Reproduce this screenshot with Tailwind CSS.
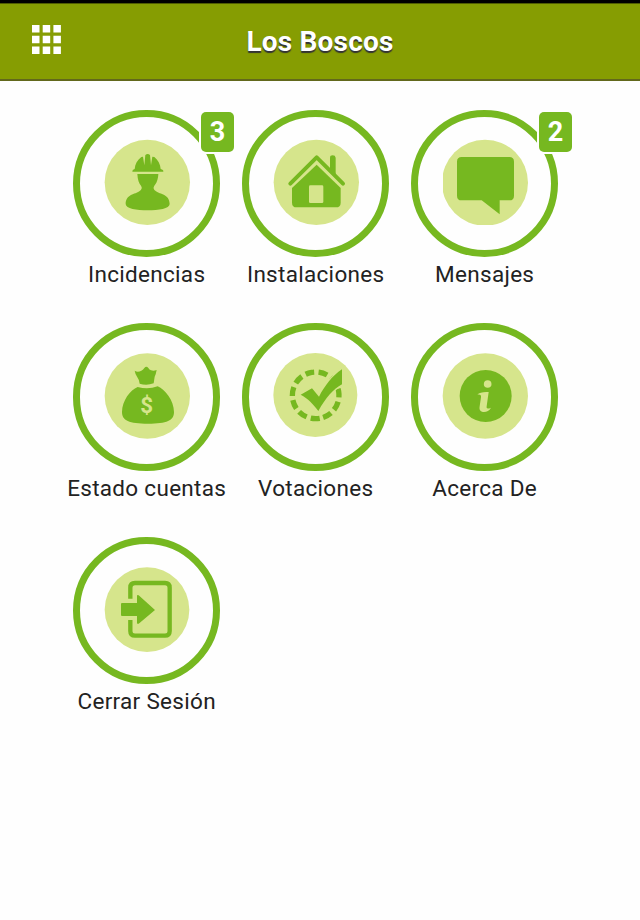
<!DOCTYPE html>
<html lang="es">
<head>
  <meta charset="UTF-8">
  <meta name="viewport" content="width=device-width, initial-scale=1.0">
  <title>Los Boscos</title>
  <script src="https://cdn.jsdelivr.net/npm/@tailwindcss/browser@4"></script>
</head>
<body class="min-h-screen bg-[#fefefe] font-[Roboto,sans-serif] text-[#222222]">
  <header class="grid h-[81px] grid-cols-[1fr_auto_1fr] items-center border-t-3 border-b-2 border-t-black border-b-[#62681c] bg-[#869d02] px-8 shadow-[inset_0_1px_0_#4f5c02]">
    <button class="mb-[3px] w-fit" aria-label="Menú">
      <svg class="size-[29px]" viewBox="0 0 29 29" fill="#fff">
        <path d="M0 0h7.5v7.5H0zM10.7 0h7.5v7.5h-7.5zM21.4 0h7.5v7.5h-7.5zM0 10.8h7.5v7.5H0zM10.7 10.8h7.5v7.5h-7.5zM21.4 10.8h7.5v7.5h-7.5zM0 21.5h7.5V29H0zM10.7 21.5h7.5V29h-7.5zM21.4 21.5h7.5V29h-7.5z"/>
      </svg>
    </button>
    <h1 class="pt-0.5 text-[28px] leading-8 font-bold tracking-[0.2px] text-white [text-shadow:0_1.5px_1px_#333]">Los Boscos</h1>
  </header>

  <main class="grid grid-cols-[repeat(3,169px)] auto-rows-[213.5px] pt-[28.5px] pl-[62.2px]">
    <!-- Incidencias -->
    <a class="flex flex-col items-center">
      <div class="relative flex size-[147.5px] items-center justify-center rounded-full border-7 border-[#76b820]">
        <svg class="size-[90px] shrink-0" viewBox="0 0 270 270" fill="#76b820">
          <circle cx="136" cy="133" r="128" fill="#d6e58c"/>
          <path d="M91 101q-1-6 7-8c1-15 8-27 20-36l5-1 4 26 3-31q7-6 14 0l3 31 4-26 6 1c11 9 18 21 19 36q9 2 8 8z"/>
          <path d="M106 108h63c-1 18-6 29-12 35-4 6-3 11 5 17 12 9 41 9 41 38 0 14-33 19-66 19s-66-5-66-19c0-29 29-29 41-38 8-6 9-11 5-17-6-6-10-17-11-35z"/>
        </svg>
        <span class="absolute -top-[5px] left-[121px] flex h-10 w-[33px] items-center justify-center rounded-[5px] bg-[#76b820] pt-0.5 text-[27px] leading-none font-bold text-white shadow-[0_0_0_2px_#fefefe]">3</span>
      </div>
      <span class="mt-[3px] text-[22.5px] leading-7 tracking-[0.3px] whitespace-nowrap">Incidencias</span>
    </a>
    <!-- Instalaciones -->
    <a class="flex flex-col items-center">
      <div class="relative flex size-[147.5px] items-center justify-center rounded-full border-7 border-[#76b820]">
        <svg class="size-[90px] shrink-0" viewBox="0 0 270 270" fill="#76b820">
          <circle cx="136" cy="133" r="128" fill="#d6e58c"/>
          <path d="M177 59q0-7 8-7t9 7v60l-17-17z"/>
          <path d="M58 137l79-79 79 79" fill="none" stroke="#76b820" stroke-width="12" stroke-linecap="round" stroke-linejoin="round"/>
          <path d="M137 80l72 70v44q0 14-14 14H77q-14 0-14-14v-44z"/>
          <rect x="114" y="142" width="43" height="53" rx="4" fill="#d6e58c"/>
        </svg>
      </div>
      <span class="mt-[3px] text-[22.5px] leading-7 tracking-[0.3px] whitespace-nowrap">Instalaciones</span>
    </a>
    <!-- Mensajes -->
    <a class="flex flex-col items-center">
      <div class="relative flex size-[147.5px] items-center justify-center rounded-full border-7 border-[#76b820]">
        <svg class="size-[90px] shrink-0" viewBox="0 0 270 270" fill="#76b820">
          <svg x="9" y="0" width="261" height="261">
            <circle cx="126" cy="134" r="129" fill="#d6e58c"/>
          </svg>
          <path d="M65 57h143q14 0 14 14v102q0 14-14 14h-29v42l-54-42H65q-14 0-14-14V71q0-14 14-14z"/>
        </svg>
        <span class="absolute -top-[5px] left-[121px] flex h-10 w-[33px] items-center justify-center rounded-[5px] bg-[#76b820] pt-0.5 text-[27px] leading-none font-bold text-white shadow-[0_0_0_2px_#fefefe]">2</span>
      </div>
      <span class="mt-[3px] text-[22.5px] leading-7 tracking-[0.3px] whitespace-nowrap">Mensajes</span>
    </a>
    <!-- Estado cuentas -->
    <a class="flex flex-col items-center">
      <div class="relative flex size-[147.5px] items-center justify-center rounded-full border-7 border-[#76b820]">
        <svg class="size-[90px] shrink-0" viewBox="0 0 270 270" fill="#76b820">
          <circle cx="136" cy="132" r="128" fill="#d6e58c"/>
          <path d="M98 56q9 6 20 0 6-3 9-8 6-8 12 0 3 5 8 7 8 3 17-1-2 12-6 20l-3 20q-21 8-42 1-2-13-7-19-6-8-8-20z"/>
          <path d="M107 105q31 9 60-2c22 9 49 43 49 77 0 26-21 35-78 35s-78-9-78-35c0-34 25-66 47-75z"/>
          <text x="134" y="182" text-anchor="middle" font-family="Roboto, sans-serif" font-size="67" font-weight="700" fill="#d6e58c">$</text>
        </svg>
      </div>
      <span class="mt-[3px] text-[22.5px] leading-7 tracking-[0.3px] whitespace-nowrap">Estado cuentas</span>
    </a>
    <!-- Votaciones -->
    <a class="flex flex-col items-center">
      <div class="relative flex size-[147.5px] items-center justify-center rounded-full border-7 border-[#76b820]">
        <svg class="size-[90px] shrink-0" viewBox="0 0 270 270" fill="#76b820">
          <circle cx="133" cy="129" r="126" fill="#d6e58c"/>
          <circle cx="134" cy="130" r="70" fill="none" stroke="#76b820" stroke-width="16" pathLength="440" stroke-dasharray="27 13" transform="rotate(80 134 130)"/>
          <path d="M89 128l34-19 21 25c17-32 40-63 69-82v45c-26 14-48 39-71 80-15-20-31-38-53-49z" stroke="#d6e58c" stroke-width="8" paint-order="stroke"/>
        </svg>
      </div>
      <span class="mt-[3px] text-[22.5px] leading-7 tracking-[0.3px] whitespace-nowrap">Votaciones</span>
    </a>
    <!-- Acerca De -->
    <a class="flex flex-col items-center">
      <div class="relative flex size-[147.5px] items-center justify-center rounded-full border-7 border-[#76b820]">
        <svg class="size-[90px] shrink-0" viewBox="0 0 270 270" fill="#76b820">
          <circle cx="136" cy="132" r="128" fill="#d6e58c"/>
          <circle cx="137" cy="132" r="78"/>
          <circle cx="143" cy="96" r="11.500" fill="#d6e58c"/>
          <path d="M112 128c5-7 19-9 34-8l-6 43c-1 7 2 9 13 4-6 11-18 15-27 12-8-3-8-9-7-16l4-27c1-7-2-9-11-8z" fill="#d6e58c"/>
        </svg>
      </div>
      <span class="mt-[3px] text-[22.5px] leading-7 tracking-[0.3px] whitespace-nowrap">Acerca De</span>
    </a>
    <!-- Cerrar Sesión -->
    <a class="flex flex-col items-center">
      <div class="relative flex size-[147.5px] items-center justify-center rounded-full border-7 border-[#76b820]">
        <svg class="size-[90px] shrink-0" viewBox="0 0 270 270" fill="#76b820">
          <circle cx="135" cy="134" r="127" fill="#d6e58c"/>
          <path d="M85 101V68q0-14 14-14h90q14 0 14 14v130q0 14-14 14H99q-14 0-14-14v-33" fill="none" stroke="#76b820" stroke-width="13"/>
          <path d="M60 114h45V93q0-5 5-2l49 44-49 41q-5 2-5-3v-20H60q-3 0-3-3v-33q0-3 3-3z"/>
        </svg>
      </div>
      <span class="mt-[3px] text-[22.5px] leading-7 tracking-[0.3px] whitespace-nowrap">Cerrar Sesión</span>
    </a>
  </main>
</body>
</html>
